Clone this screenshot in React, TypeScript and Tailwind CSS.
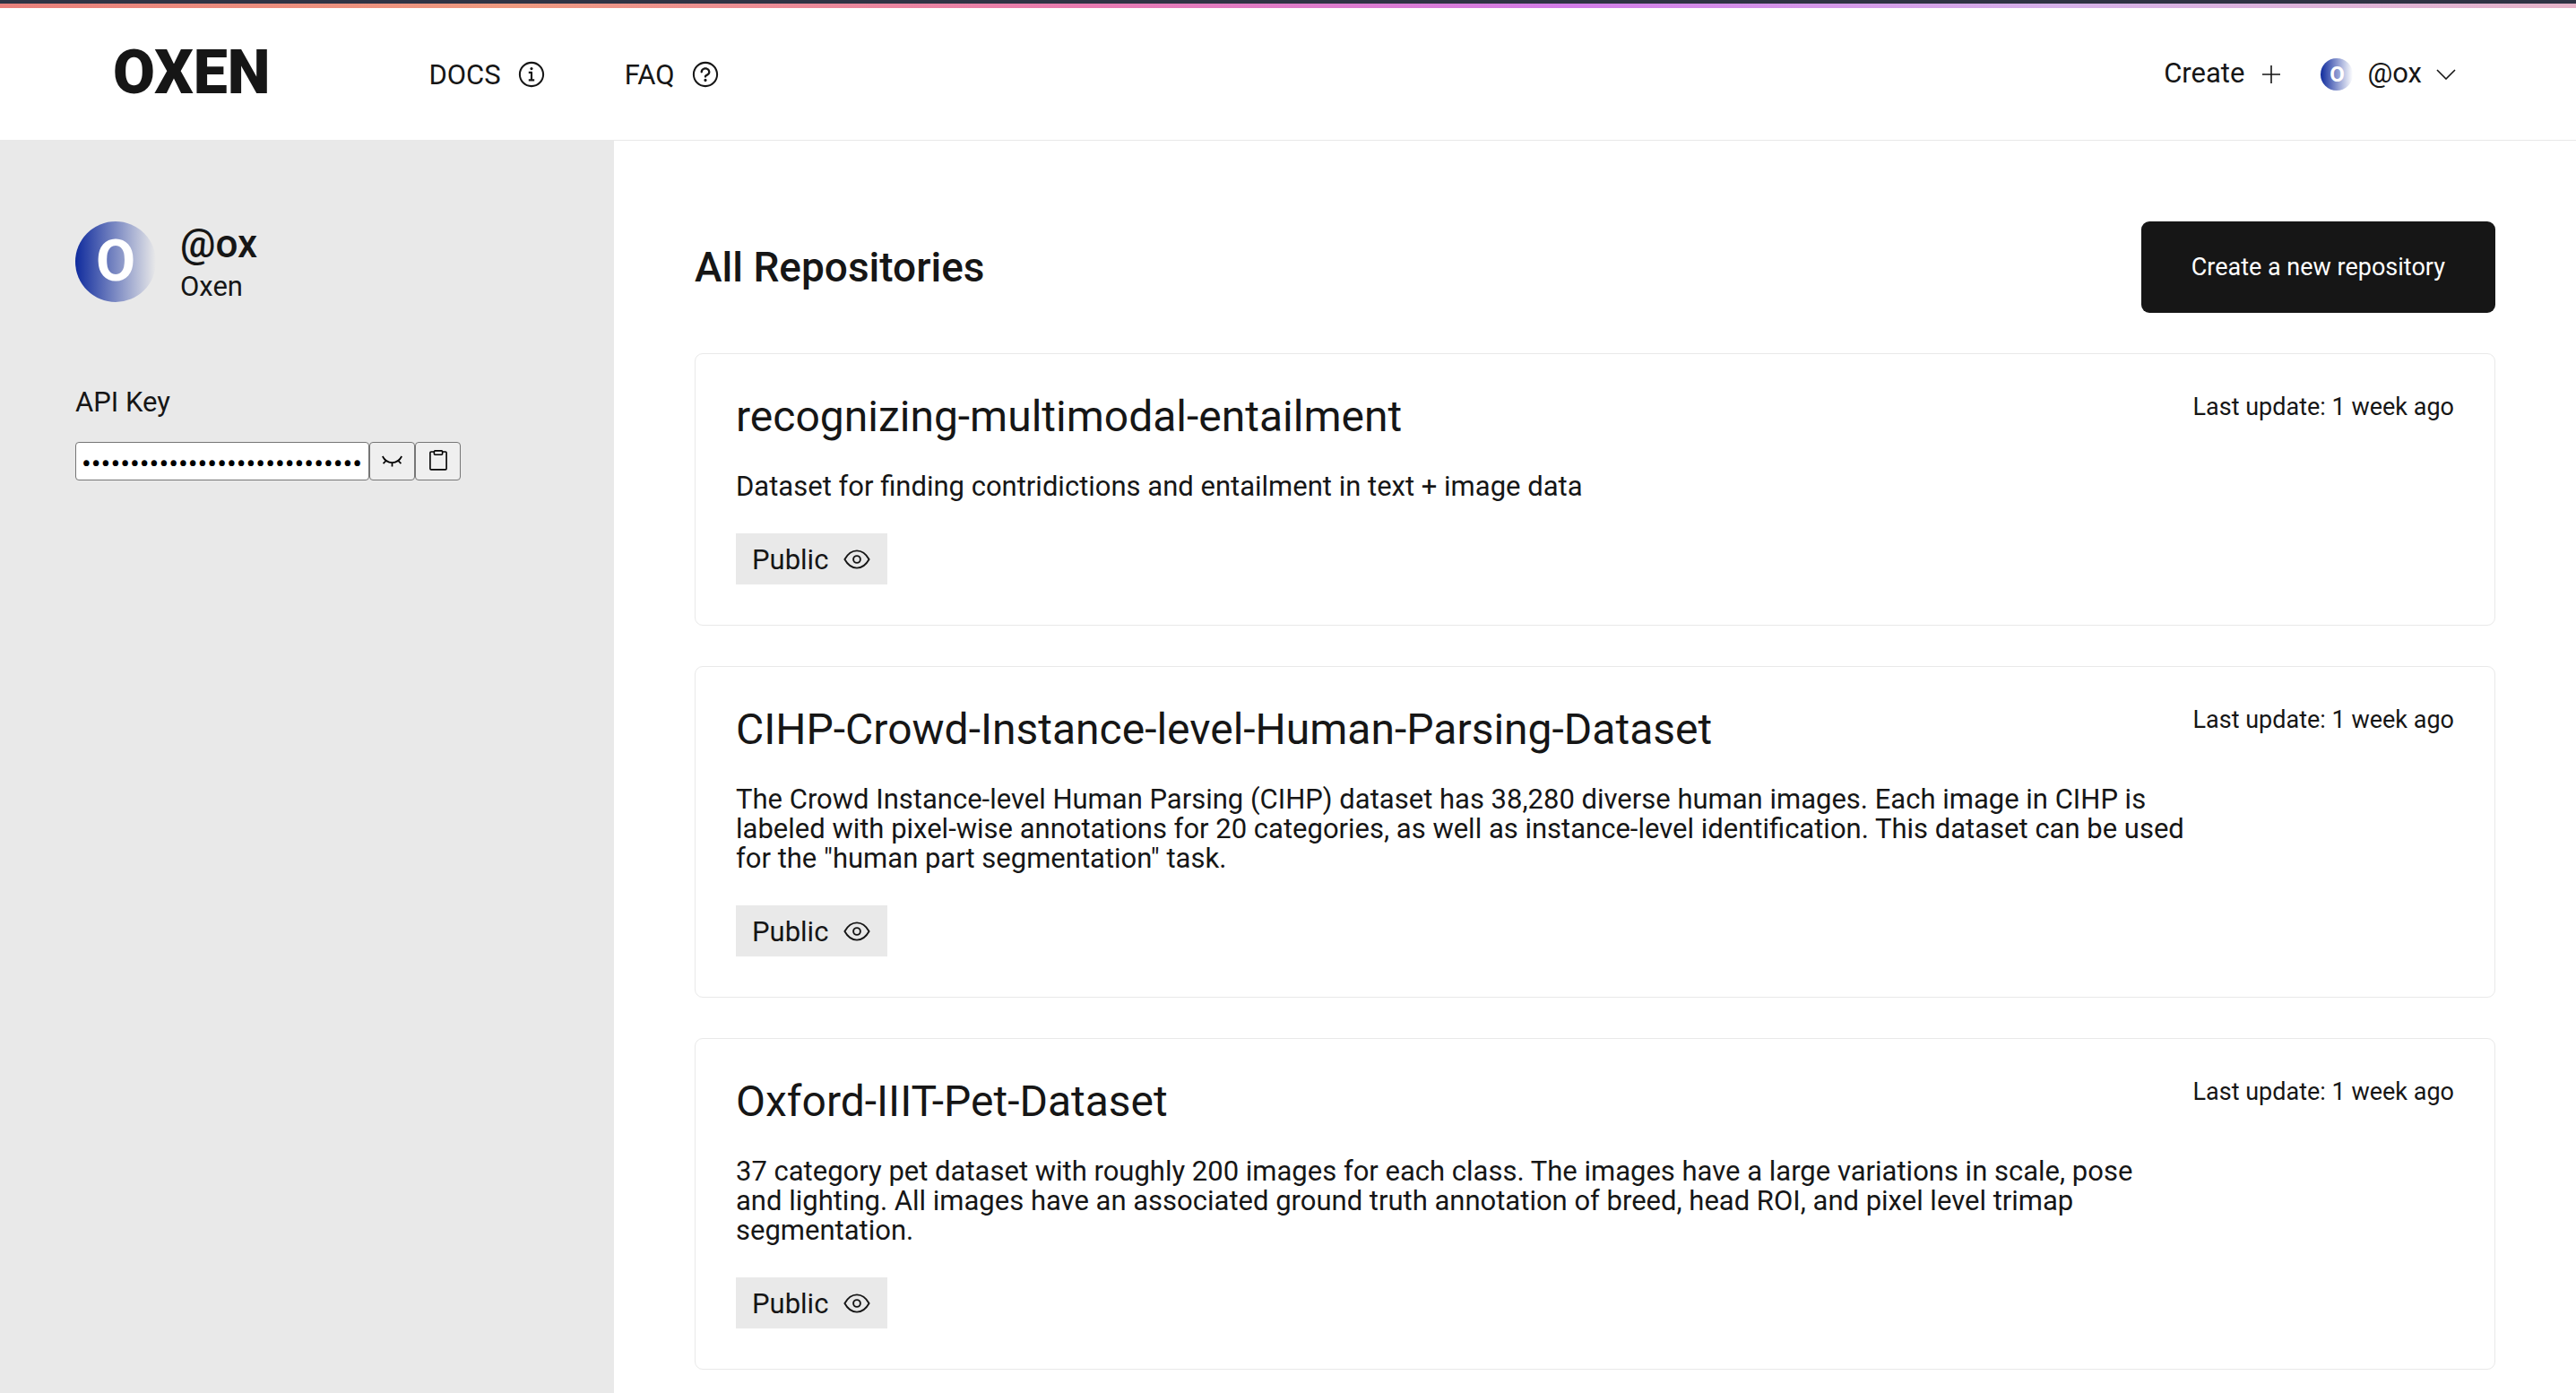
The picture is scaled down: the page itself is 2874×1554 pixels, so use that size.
import type { ReactNode } from "react";
import { RxInfoCircled, RxQuestionMarkCircled } from "react-icons/rx";

type Repo = { name: string; description: string; updated: string };

const repos: Repo[] = [
  {
    name: "recognizing-multimodal-entailment",
    description:
      "Dataset for finding contridictions and entailment in text + image data",
    updated: "1 week ago",
  },
  {
    name: "CIHP-Crowd-Instance-level-Human-Parsing-Dataset",
    description:
      'The Crowd Instance-level Human Parsing (CIHP) dataset has 38,280 diverse human images. Each image in CIHP is labeled with pixel-wise annotations for 20 categories, as well as instance-level identification. This dataset can be used for the "human part segmentation" task.',
    updated: "1 week ago",
  },
  {
    name: "Oxford-IIIT-Pet-Dataset",
    description:
      "37 category pet dataset with roughly 200 images for each class. The images have a large variations in scale, pose and\u00a0lighting. All images have an associated ground truth annotation of breed, head ROI, and pixel level trimap segmentation.",
    updated: "1 week ago",
  },
];

type IconProps = { width: number; height: number; stroke: number; children: ReactNode };

function Icon({ width, height, stroke, children }: IconProps) {
  return (
    <svg
      width={width}
      height={height}
      viewBox={`0 0 ${width} ${height}`}
      fill="none"
      stroke="currentColor"
      strokeWidth={stroke}
      aria-hidden="true"
    >
      {children}
    </svg>
  );
}

function ChevronDown() {
  return (
    <Icon width={22} height={12} stroke={1.6}>
      <path d="M1 1 L11 11 L21 1" />
    </Icon>
  );
}

function Plus() {
  return (
    <Icon width={20} height={20} stroke={1.6}>
      <path d="M10 0 V20 M0 10 H20" />
    </Icon>
  );
}

function Eye() {
  return (
    <Icon width={32} height={32} stroke={1.9}>
      <path
        d="M2.4 16 C6 9.6 10.6 6.4 16 6.4 C21.4 6.4 26 9.6 29.6 16 C26 22.4 21.4 25.6 16 25.6 C10.6 25.6 6 22.4 2.4 16 Z"
        strokeLinejoin="round"
      />
      <circle cx="16" cy="16" r="3.9" />
    </Icon>
  );
}

function EyeClosed() {
  return (
    <Icon width={23} height={25} stroke={1.7}>
      <path d="M0.8 7 C5.5 16.4 17.5 16.4 22.2 7 M11.5 14 V18.6 M4.6 12 L1.6 15.2 M18.4 12 L21.4 15.2" />
    </Icon>
  );
}

function Clipboard() {
  return (
    <Icon width={20} height={25} stroke={1.6}>
      <path d="M5.4 2 H2 Q0.9 2 0.9 3.1 V20.8 Q0.9 21.9 2 21.9 H18 Q19.1 21.9 19.1 20.8 V3.1 Q19.1 2 18 2 H14.6" />
      <rect x="5.4" y="0.9" width="9.2" height="4.4" rx="1" />
    </Icon>
  );
}

function NavLink({ label, children }: { label: string; children: ReactNode }) {
  return (
    <a href="#" className="flex items-center gap-[18px]">
      <span className="pt-[3px]">{label}</span>
      {children}
    </a>
  );
}

function Header() {
  return (
    <header className="flex h-[148px] items-center justify-between border-b border-[#e9e9e9] pr-[134px] pl-[126px]">
      <div className="flex items-center">
        <a href="#" className="pb-1 text-[68px] leading-[66px] font-black">
          OXEN
        </a>
        <nav className="ml-[177px] flex gap-[88px]">
          <NavLink label="DOCS">
            <RxInfoCircled size={32} />
          </NavLink>
          <NavLink label="FAQ">
            <RxQuestionMarkCircled size={32} />
          </NavLink>
        </nav>
      </div>
      <div className="flex items-center gap-[45px]">
        <button type="button" className="flex items-center gap-5">
          Create
          <Plus />
        </button>
        <button type="button" className="flex items-center gap-4">
          <span className="flex size-9 items-center justify-center rounded-full bg-linear-to-r from-[#0f2b9d] to-[#0f2b9d]/0 text-2xl font-bold text-white">
            O
          </span>
          @ox
          <ChevronDown />
        </button>
      </div>
    </header>
  );
}

function Sidebar() {
  return (
    <aside className="w-[685px] shrink-0 bg-[#e9e9e9] px-[84px] pt-[90px]">
      <div className="flex items-start gap-[27px]">
        <span className="flex size-[90px] items-center justify-center rounded-full bg-linear-to-r from-[#0f2b9d] to-[#0f2b9d]/0 text-[64px] leading-none font-bold text-white">
          O
        </span>
        <div>
          <h2 className="text-[44px] leading-[50px] font-medium">@ox</h2>
          <p className="mt-[6px] leading-[33px]">Oxen</p>
        </div>
      </div>
      <label htmlFor="api-key" className="mt-[95px] block leading-[33px]">
        API Key
      </label>
      <div className="mt-7 flex h-[43px]">
        <input
          id="api-key"
          type="password"
          readOnly
          value="0123456789abcdef0123456789abcdef0123"
          className="w-[328px] rounded-[4px] border border-[#767676] bg-white px-[6px] pt-1 text-[32px] text-black"
        />
        <button
          type="button"
          aria-label="Show API key"
          className="flex w-[51px] items-center justify-center rounded-[4px] border border-[#767676] bg-[#efefef] text-black"
        >
          <EyeClosed />
        </button>
        <button
          type="button"
          aria-label="Copy API key"
          className="flex w-[51px] items-center justify-center rounded-[4px] border border-[#767676] bg-[#efefef] text-black"
        >
          <Clipboard />
        </button>
      </div>
    </aside>
  );
}

function RepoCard({ repo }: { repo: Repo }) {
  return (
    <article className="flex justify-between rounded-[9px] border border-[#e9e9e9] p-[45px]">
      <div className="max-w-[1624px]">
        <h2 className="text-5xl leading-[50px]">
          <a href="#">{repo.name}</a>
        </h2>
        <p className="mt-9 leading-[33px]">{repo.description}</p>
        <span className="mt-9 inline-flex h-[57px] items-center gap-4 bg-[#e9e9e9] px-[18px] align-top">
          <span className="pt-[3px]">Public</span>
          <Eye />
        </span>
      </div>
      <p className="shrink-0 text-[27px] leading-[29px]">
        Last update: {repo.updated}
      </p>
    </article>
  );
}

export default function App() {
  return (
    <div className="flex min-h-screen flex-col bg-white font-[Roboto,sans-serif] text-[31px] text-[#161616]">
      <div className="h-1 bg-[#2f3344]" />
      <div className="h-[5px] bg-[linear-gradient(to_right,#e8807c,#ee9a80_20%,#e87bb0_42%,#d27de8_61%,#d6b2ea_80%,#e6b4c8)]" />
      <Header />
      <div className="flex grow">
        <Sidebar />
        <main className="min-w-0 grow px-[90px] pt-[90px]">
          <div className="flex items-center justify-between">
            <h1 className="text-[46px] font-medium">All Repositories</h1>
            <button
              type="button"
              className="h-[102px] rounded-[9px] bg-[#161616] px-14 text-[27px] text-white"
            >
              Create a new repository
            </button>
          </div>
          <div className="mt-[45px] flex flex-col gap-[45px]">
            {repos.map((repo) => (
              <RepoCard key={repo.name} repo={repo} />
            ))}
          </div>
        </main>
      </div>
    </div>
  );
}
